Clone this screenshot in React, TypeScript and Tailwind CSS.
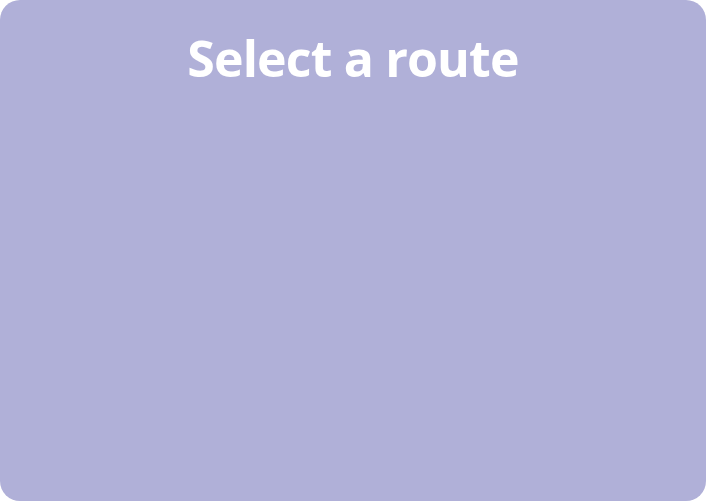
export default function App() {
  return (
    <div className="w-[706px] h-[501px] bg-white">
      <div className="w-full h-full rounded-[20px] bg-[#b0b0d8] flex flex-col items-center pt-[33px]">
        <h1 className="text-white font-bold text-[50px] leading-[50px] tracking-[-0.85px]" style={{ fontFamily: '"Open Sans", sans-serif' }}>
          Select a route
        </h1>
      </div>
    </div>
  );
}
